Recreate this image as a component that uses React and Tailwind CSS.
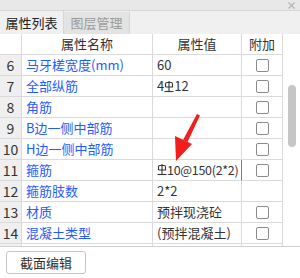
import React from 'react';

const font = { fontFamily: '"Noto Sans CJK SC", "Noto Sans", sans-serif' };

// rebar grade symbol (not in any installed font), drawn small
const Rebar = () => (
    <svg width="10" height="12" viewBox="0 0 10 12" className="inline-block shrink-0 -mt-[2px] align-middle">
        <path d="M1.5 6 V3 Q1.5 1.5 3 1.5 H7 Q8.5 1.5 8.5 3 V6 H1.5" fill="none" stroke="#333" strokeWidth="1.1" />
        <path d="M5 0 V10" stroke="#333" strokeWidth="1.1" />
        <path d="M0.5 10.5 H9.5" stroke="#333" strokeWidth="1.1" />
    </svg>
);

const Check = () => (
    <span className="block w-[13px] h-[13px] rounded-[2px] border border-[#8a8a8a] bg-white" />
);

const rows = [
    { n: 6, name: '马牙槎宽度(mm)', value: '60', check: true },
    { n: 7, name: '全部纵筋', value: <>4<Rebar />12</>, check: true },
    { n: 8, name: '角筋', value: '', check: true },
    { n: 9, name: 'B边一侧中部筋', value: '', check: true },
    { n: 10, name: 'H边一侧中部筋', value: '', check: true },
    { n: 11, name: '箍筋', value: <><Rebar />10@150(2*2)</>, check: true, editing: true },
    { n: 12, name: '箍筋肢数', value: '2*2', check: false },
    { n: 13, name: '材质', value: '预拌现浇砼', check: true },
    { n: 14, name: '混凝土类型', value: '(预拌混凝土)', check: true },
    { n: 15, name: '', value: '', check: false },
];

const cell = 'h-[21px] border-r border-b border-[#dadada] flex items-center';

export default function App() {
    return (
        <div className="relative w-[300px] h-[278px] bg-white flex flex-col overflow-hidden text-[13px] text-[#333]" style={font}>
            {/* title strip */}
            <div className="h-[11px] bg-[#e8e8e8] border-b border-[#d6d6d6] flex items-center justify-end pr-[5px]">
                <svg width="7" height="7" viewBox="0 0 7 7">
                    <path d="M0.5 0.5 L6.5 6.5 M6.5 0.5 L0.5 6.5" stroke="#b4b4b4" strokeWidth="1.2" />
                </svg>
            </div>

            {/* tabs */}
            <div className="h-[23px] bg-[#f0f0f0] flex items-end">
                <div className="h-[23px] w-[64px] flex items-center justify-center text-[#222] border-r border-[#d6d6d6]">属性列表</div>
                <div className="h-[22px] w-[66px] flex items-center justify-center text-[#9a9a9a] bg-[#e3e3e3] border-r border-[#d6d6d6]">图层管理</div>
            </div>

            {/* grid + scrollbar */}
            <div className="flex h-[213px] border-b border-[#d0d0d0]">
                <div className="w-[283px] overflow-hidden">
                    <div className="grid grid-cols-[22px_131px_89px_41px]">
                        <div className={`${cell} bg-white`} />
                        <div className={`${cell} justify-center`}>属性名称</div>
                        <div className={`${cell} justify-center`}>属性值</div>
                        <div className={`${cell} justify-center`}>附加</div>
                        {rows.map(r => (
                            <React.Fragment key={r.n}>
                                <div className={`${cell} justify-center bg-[#efefef] text-[14px] text-[#333]`}>{r.n}</div>
                                <div className={`${cell} pl-[4px] text-[#1f5cff] whitespace-nowrap`}>{r.name}</div>
                                <div className={`${cell} pl-[4px] ${r.editing ? 'border-r-[#7a7a7a] pl-[3px]' : ''}`}>
                                    <span className={`whitespace-nowrap ${r.editing ? 'text-[12.5px] tracking-[-0.3px]' : ''}`}>{r.value}</span>
                                </div>
                                <div className={`${cell} justify-center`}>{r.check && <Check />}</div>
                            </React.Fragment>
                        ))}
                    </div>
                </div>
                <div className="flex-1 bg-white pl-[5px] pt-[51px]">
                    <div className="w-[8px] h-[62px] rounded-full bg-[#c6c6c6]" />
                </div>
            </div>

            {/* button */}
            <div className="pl-[6px] pt-[4px]">
                <div className="w-[80px] h-[23px] rounded-[3px] border border-[#c4c4c4] bg-white text-center text-[13px] leading-[21px] text-[#333] cursor-default">
                    截面编辑
                </div>
            </div>

            {/* red annotation arrow */}
            <svg className="absolute left-0 top-0 pointer-events-none" width="300" height="278">
                <polygon points="197,114 200,115.5 187.5,142 183,140" fill="#f21d1d" />
                <polygon points="176,161 175,136 192,144" fill="#f21d1d" />
            </svg>
        </div>
    );
}
